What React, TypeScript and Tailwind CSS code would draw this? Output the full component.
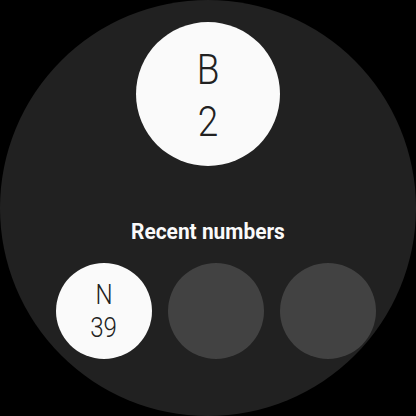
import React from "react";

export default function App() {
  return (
    <div className="w-[416px] h-[416px] bg-black" style={{ fontFamily: "Roboto, 'Noto Sans', sans-serif" }}>
      <div className="w-full h-full rounded-full bg-[#212121] flex flex-col items-center pt-[22px]">
        <div className="w-[144px] h-[144px] rounded-full bg-[#fafafa] flex flex-col items-center justify-center text-[#212121] font-light text-[43px] leading-[52px] pt-[2px]">
          <span className="inline-block scale-x-[0.86]">B</span>
          <span className="inline-block scale-x-[0.86]">2</span>
        </div>
        <div className="mt-[53px] text-[22px] leading-[26px] font-bold text-[#fafafa] scale-x-[0.95]">Recent numbers</div>
        <div className="mt-[18px] flex gap-4 ml-[16px]">
          <div className="w-[96px] h-[96px] rounded-full bg-[#fafafa] flex flex-col items-center justify-center text-[#212121] font-light text-[28px] leading-[33px]">
            <span className="inline-block scale-x-[0.86]">N</span>
            <span className="inline-block scale-x-[0.86]">39</span>
          </div>
          <div className="w-[96px] h-[96px] rounded-full bg-[#424242]" />
          <div className="w-[96px] h-[96px] rounded-full bg-[#424242]" />
        </div>
      </div>
    </div>
  );
}
